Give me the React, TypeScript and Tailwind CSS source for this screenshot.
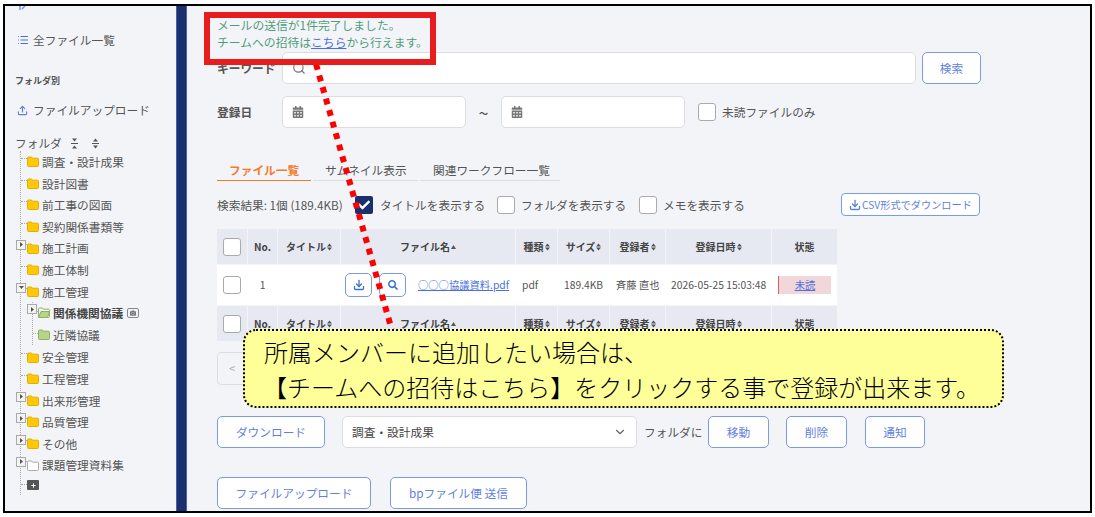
import React from "react";
import { Search, ChevronDown, Upload, List, Download } from "lucide-react";
import { FaCalendarAlt, FaSearch, FaCheck, FaCamera, FaPlus } from "react-icons/fa";

const font = "font-['Noto_Sans_CJK_JP','Noto_Sans',sans-serif]";

const Folder = ({ color = "#ffc800", edge = "#dcae10", open = false }: { color?: string; edge?: string; open?: boolean }) => (
  <svg width="12" height="11" viewBox="0 0 12 11" className="shrink-0">
    <path d="M.5 2a1 1 0 0 1 1-1h3l1 1.2H10.500a1 1 0 0 1 1 1V9.500a1 1 0 0 1-1 1h-9a1 1 0 0 1-1-1z" fill={open ? "#f3f4f8" : color} stroke={edge} />
    {open && <path d="M.5 10.500l2.500-6h8.700l-2.200 6z" fill={color} stroke={edge} />}
  </svg>
);

const Toggle = ({ open = false }: { open?: boolean }) => (
  <span className="absolute left-[-11px] top-[-3px] flex h-[10px] w-[10px] items-center justify-center border border-[#aaa] bg-[#f3f3f3]">
    <svg width="5" height="5" viewBox="0 0 5 5">
      {open ? <path d="M0 1h5L2.500 4z" fill="#555" /> : <path d="M1 0l3 2.500L1 5z" fill="#555" />}
    </svg>
  </span>
);

const TreeRow = ({ label, toggle, open, white }: { label: string; toggle?: boolean; open?: boolean; white?: boolean }) => (
  <div className="relative flex h-[21.6px] items-center gap-[3px] pl-[6px] text-[11.7px] text-[#555]">
    <span className="absolute left-0 top-[7px] w-[6px] border-t border-dotted border-[#aaa]" />
    <span className="relative flex items-center">
      {toggle && <Toggle open={open} />}
      {white ? <Folder color="#ffffff" edge="#aaaaaa" /> : <Folder />}
    </span>
    <span className="whitespace-nowrap">{label}</span>
  </div>
);

const SubRow = ({ label, toggle, active }: { label: string; toggle?: boolean; active?: boolean }) => (
  <div className="relative flex h-[21.6px] items-center gap-[3px] pl-[5px] text-[11.7px] text-[#555]">
    <span className="absolute left-0 top-[9px] w-[5px] border-t border-dotted border-[#aaa]" />
    <span className="relative flex items-center">
      {toggle && <Toggle />}
      <Folder color="#b7d48a" edge="#8fb060" open={active} />
    </span>
    <span className={active ? "whitespace-nowrap font-bold text-[#444]" : "whitespace-nowrap"}>{label}</span>
    {active && (
      <span className="ml-[1px] flex h-[10px] w-[12px] items-center justify-center rounded-[2px] border border-[#888]">
        <FaCamera size={6} color="#777" />
      </span>
    )}
  </div>
);

const Sidebar = () => (
  <aside className="relative w-[171px] shrink-0 overflow-hidden text-[#555]">
    {/* clipped icon at the top edge of the screenshot */}
    <svg width="8" height="4" viewBox="0 0 8 4" className="absolute left-[14px] top-0">
      <path d="M1 0v4M6 0L3 3" fill="none" stroke="#6f8fe0" strokeWidth="1.4" />
    </svg>
    <div className="flex items-center gap-[4px] pl-[12px] pt-[25px] text-[11.7px] leading-[18px]">
      <List size={12} color="#4a6fd8" />
      <span>全ファイル一覧</span>
    </div>
    <div className="pl-[10px] pt-[25px] text-[9px] font-bold leading-[14px] text-[#555]">フォルダ別</div>
    <div className="flex items-center gap-[5px] pl-[12px] pt-[13px] text-[11.7px] leading-[18px]">
      <Upload size={11} color="#5a7fd8" strokeWidth={2.4} />
      <span>ファイルアップロード</span>
    </div>
    <div className="flex items-center gap-[8px] pl-[10px] pt-[15px] text-[11.7px] leading-[18px]">
      <span>フォルダ</span>
      <svg width="32" height="11" viewBox="0 0 32 11">
        <path d="M2 .5h5L4.500 3.500zM2 10.500h5L4.500 7.500z" fill="#555" />
        <path d="M1 5.500h7" stroke="#555" strokeWidth="1" />
        <path d="M23 3.500h5L25.500 .5zM23 7.500h5L25.500 10.500z" fill="#555" />
        <path d="M22 5.500h7" stroke="#555" strokeWidth="1" />
      </svg>
    </div>
    <div className="ml-[15px] mt-[-1px] border-l border-dotted border-[#aaa]">
      <TreeRow label="調査・設計成果" />
      <TreeRow label="設計図書" />
      <TreeRow label="前工事の図面" />
      <TreeRow label="契約関係書類等" />
      <TreeRow label="施工計画" toggle />
      <TreeRow label="施工体制" />
      <TreeRow label="施工管理" toggle open />
      <div className="ml-[11px] border-l border-dotted border-[#aaa]">
        <SubRow label="関係機関協議" toggle active />
        <SubRow label="近隣協議" />
      </div>
      <div className="h-[1px]" />
      <TreeRow label="安全管理" />
      <TreeRow label="工程管理" />
      <TreeRow label="出来形管理" toggle />
      <TreeRow label="品質管理" toggle />
      <TreeRow label="その他" toggle />
      <TreeRow label="課題管理資料集" toggle white />
      <div className="relative flex h-[19px] items-center pl-[6px]">
        <span className="absolute left-0 top-[8px] w-[6px] border-t border-dotted border-[#aaa]" />
        <span className="flex h-[10px] w-[12px] items-center justify-center rounded-[1px] bg-[#555]">
          <FaPlus size={5} color="#fff" />
        </span>
      </div>
    </div>
  </aside>
);

const Check = ({ checked }: { checked?: boolean }) =>
  checked ? (
    <span className="flex h-[18px] w-[18px] shrink-0 items-center justify-center rounded-[2px] bg-[#1a2f6e]">
      <FaCheck size={12} color="#fff" />
    </span>
  ) : (
    <span className="block h-[18px] w-[18px] shrink-0 rounded-[3px] border border-[#aaa] bg-white" />
  );

const Btn = ({ w, label, h = "h-[32px]" }: { w: string; label: string; h?: string }) => (
  <button className={`${w} ${h} shrink-0 rounded-[5px] border border-[#7a9bea] bg-white text-[11.7px] text-[#5f7fe0]`}>{label}</button>
);

const Sort = () => (
  <svg width="5" height="8" viewBox="0 0 5 8" className="ml-[1px] inline-block">
    <path d="M0 3.400h5L2.500 .4zM0 4.600h5L2.500 7.600z" fill="#555" />
  </svg>
);

const Th = ({ w, label, sort, up }: { w: string; label?: string; sort?: boolean; up?: boolean }) => (
  <div className={`${w} flex shrink-0 items-center justify-center whitespace-nowrap bg-[#e6e9f2] text-[10px] font-bold text-[#444]`}>
    {label}
    {sort && <Sort />}
    {up && (
      <svg width="5" height="4" viewBox="0 0 5 4" className="ml-[1px]">
        <path d="M0 4h5L2.500 0z" fill="#555" />
      </svg>
    )}
  </div>
);

const HeaderRow = () => (
  <div className="flex h-[35px] gap-[1px]">
    <Th w="w-[30px]" />
    <Th w="w-[29px]" label="No." />
    <Th w="w-[62px]" label="タイトル" sort />
    <Th w="w-[174px]" label="ファイル名" up />
    <Th w="w-[41px]" label="種類" sort />
    <Th w="w-[51px]" label="サイズ" sort />
    <Th w="w-[55px]" label="登録者" sort />
    <Th w="w-[105px]" label="登録日時" sort />
    <Th w="w-[65px]" label="状態" />
  </div>
);

const App = () => (
  <div className={`${font} relative h-[517px] w-[1095px] overflow-hidden bg-white`}>
    <div className="ml-[3px] mt-[4px] flex h-[509px] w-[1089px] border-2 border-black bg-[#f3f4f8]">
      <Sidebar />
      <div className="w-[11px] shrink-0 border-x border-[#4a62a8] bg-[#1a2f6e]" />
      <main className="flex-1 pl-[30px] pt-[11px] text-[#555]">
        <div className="h-[35px] text-[11.8px] leading-[16.5px] text-[#4f9c7c]">
          <p>メールの送信が1件完了しました。</p>
          <p>
            チームへの招待は<span className="text-[#4a6fe0] underline">こちら</span>から行えます。
          </p>
        </div>

        <div className="flex h-[32px] items-center">
          <span className="w-[65px] text-[11.7px] font-bold">キーワード</span>
          <div className="flex h-[32px] w-[634px] items-center rounded-[5px] border border-[#ddd] bg-white pl-[9px]">
            <Search size={14} color="#777" />
          </div>
          <Btn w="ml-[6px] w-[59px]" label="検索" />
        </div>

        <div className="mt-[12px] flex h-[32px] items-center">
          <span className="w-[65px] text-[11.7px] font-bold">登録日</span>
          <div className="flex h-[32px] w-[184px] items-center rounded-[5px] border border-[#ddd] bg-white pl-[9px]">
            <FaCalendarAlt size={12} color="#777" />
          </div>
          <span className="w-[35px] text-center text-[18px] leading-[18px]">~</span>
          <div className="flex h-[32px] w-[184px] items-center rounded-[5px] border border-[#ddd] bg-white pl-[9px]">
            <FaCalendarAlt size={12} color="#777" />
          </div>
          <span className="ml-[13px]">
            <Check />
          </span>
          <span className="ml-[6px] text-[11.7px]">未読ファイルのみ</span>
        </div>

        <div className="mt-[32px] flex h-[21px] gap-[2px] text-[11.7px]">
          <div className="w-[94px] border-b border-[#f57a2e] pl-[12px] font-bold leading-[19px] text-[#f57a2e]">ファイル一覧</div>
          <div className="w-[105px] border-b border-[#ddd] pl-[12px] leading-[19px]">サムネイル表示</div>
          <div className="w-[140px] border-b border-[#ddd] pl-[13px] leading-[19px]">関連ワークフロー一覧</div>
        </div>

        <div className="mt-[12px] flex h-[23px] items-center text-[11.7px]">
          <span className="w-[138px] whitespace-nowrap">検索結果: 1個 (189.4KB)</span>
          <Check checked />
          <span className="ml-[7px] w-[117px] whitespace-nowrap">タイトルを表示する</span>
          <Check />
          <span className="ml-[6px] w-[118px] whitespace-nowrap">フォルダを表示する</span>
          <Check />
          <span className="ml-[6px] w-[178px] whitespace-nowrap">メモを表示する</span>
          <button className="flex h-[23px] w-[139px] shrink-0 items-center justify-center gap-[1px] rounded-[4px] border border-[#7a9bea] bg-white text-[10.2px] text-[#5f7fe0]">
            <Download size={12} strokeWidth={2.6} />
            CSV形式でダウンロード
          </button>
        </div>

        <div className="mt-[13px] flex w-[620px] flex-col gap-[1px]">
          <div className="relative">
            <HeaderRow />
            <span className="absolute left-[6px] top-[9px]">
              <Check />
            </span>
          </div>
          <div className="flex h-[40px] items-center bg-white text-[10.3px]">
            <span className="w-[30px] pl-[6px]">
              <Check />
            </span>
            <span className="w-[31px] text-center">1</span>
            <span className="ml-[67px] flex h-[24px] w-[27px] items-center justify-center rounded-[5px] border border-[#7a9bea]">
              <Download size={12} color="#3d6fd8" strokeWidth={2.6} />
            </span>
            <span className="ml-[7px] flex h-[24px] w-[27px] items-center justify-center rounded-[5px] border border-[#7a9bea]">
              <FaSearch size={10} color="#3d6fd8" />
            </span>
            <span className="ml-[12px] w-[104px] whitespace-nowrap text-[#4a6fe0] underline">○○○協議資料.pdf</span>
            <span className="w-[42px]">pdf</span>
            <span className="w-[52px]">189.4KB</span>
            <span className="w-[55px] whitespace-nowrap">斉藤 直也</span>
            <span className="w-[107px] whitespace-nowrap">2026-05-25 15:03:48</span>
            <span className="flex h-[18px] w-[53px] items-center justify-center border-l border-[#e05a5a] bg-[#f2d7da] text-[#4a6fe0] underline">未読</span>
          </div>
          <div className="relative">
            <HeaderRow />
            <span className="absolute left-[6px] top-[9px]">
              <Check />
            </span>
          </div>
        </div>

        <div className="mt-[11px] flex h-[33px] w-[60px] items-center rounded-[4px] border border-[#ddd] pl-[11px] text-[11px] text-[#aaa]">&lt;</div>

        <div className="mt-[31px] flex h-[32px] items-center">
          <Btn w="w-[108px]" label="ダウンロード" />
          <div className="ml-[17px] flex h-[32px] w-[295px] items-center justify-between rounded-[5px] border border-[#ddd] bg-white px-[9px] text-[11.7px] text-[#444]">
            調査・設計成果
            <ChevronDown size={14} color="#666" />
          </div>
          <span className="ml-[7px] w-[64px] whitespace-nowrap text-[11.7px]">フォルダに</span>
          <Btn w="w-[61px]" label="移動" />
          <Btn w="ml-[17px] w-[61px]" label="削除" />
          <Btn w="ml-[18px] w-[60px]" label="通知" />
        </div>

        <div className="mt-[29px] flex h-[32px] gap-[19px]">
          <Btn w="w-[154px]" label="ファイルアップロード" />
          <Btn w="w-[137px]" label="bpファイル便 送信" />
        </div>
      </main>
    </div>

    {/* annotation layer */}
    <svg width="1095" height="517" className="pointer-events-none absolute left-0 top-0">
      <line x1="316" y1="64" x2="393" y2="334" stroke="#ff0000" strokeWidth="6" strokeDasharray="6 6" />
    </svg>
    <div className="pointer-events-none absolute left-[204px] top-[12px] h-[53px] w-[232px] border-[6px] border-[#e81c1c]" />
    <div className="absolute left-[243px] top-[329px] flex h-[79px] w-[761px] flex-col justify-center rounded-[13px] border-2 border-dotted border-black bg-[#ffff99] pl-[19px] text-[24px] font-light leading-[35px] text-black">
      <p>所属メンバーに追加したい場合は、</p>
      <p className="ml-[-1px] whitespace-nowrap">【チームへの招待はこちら】をクリックする事で登録が出来ます。</p>
    </div>
  </div>
);

export default App;
